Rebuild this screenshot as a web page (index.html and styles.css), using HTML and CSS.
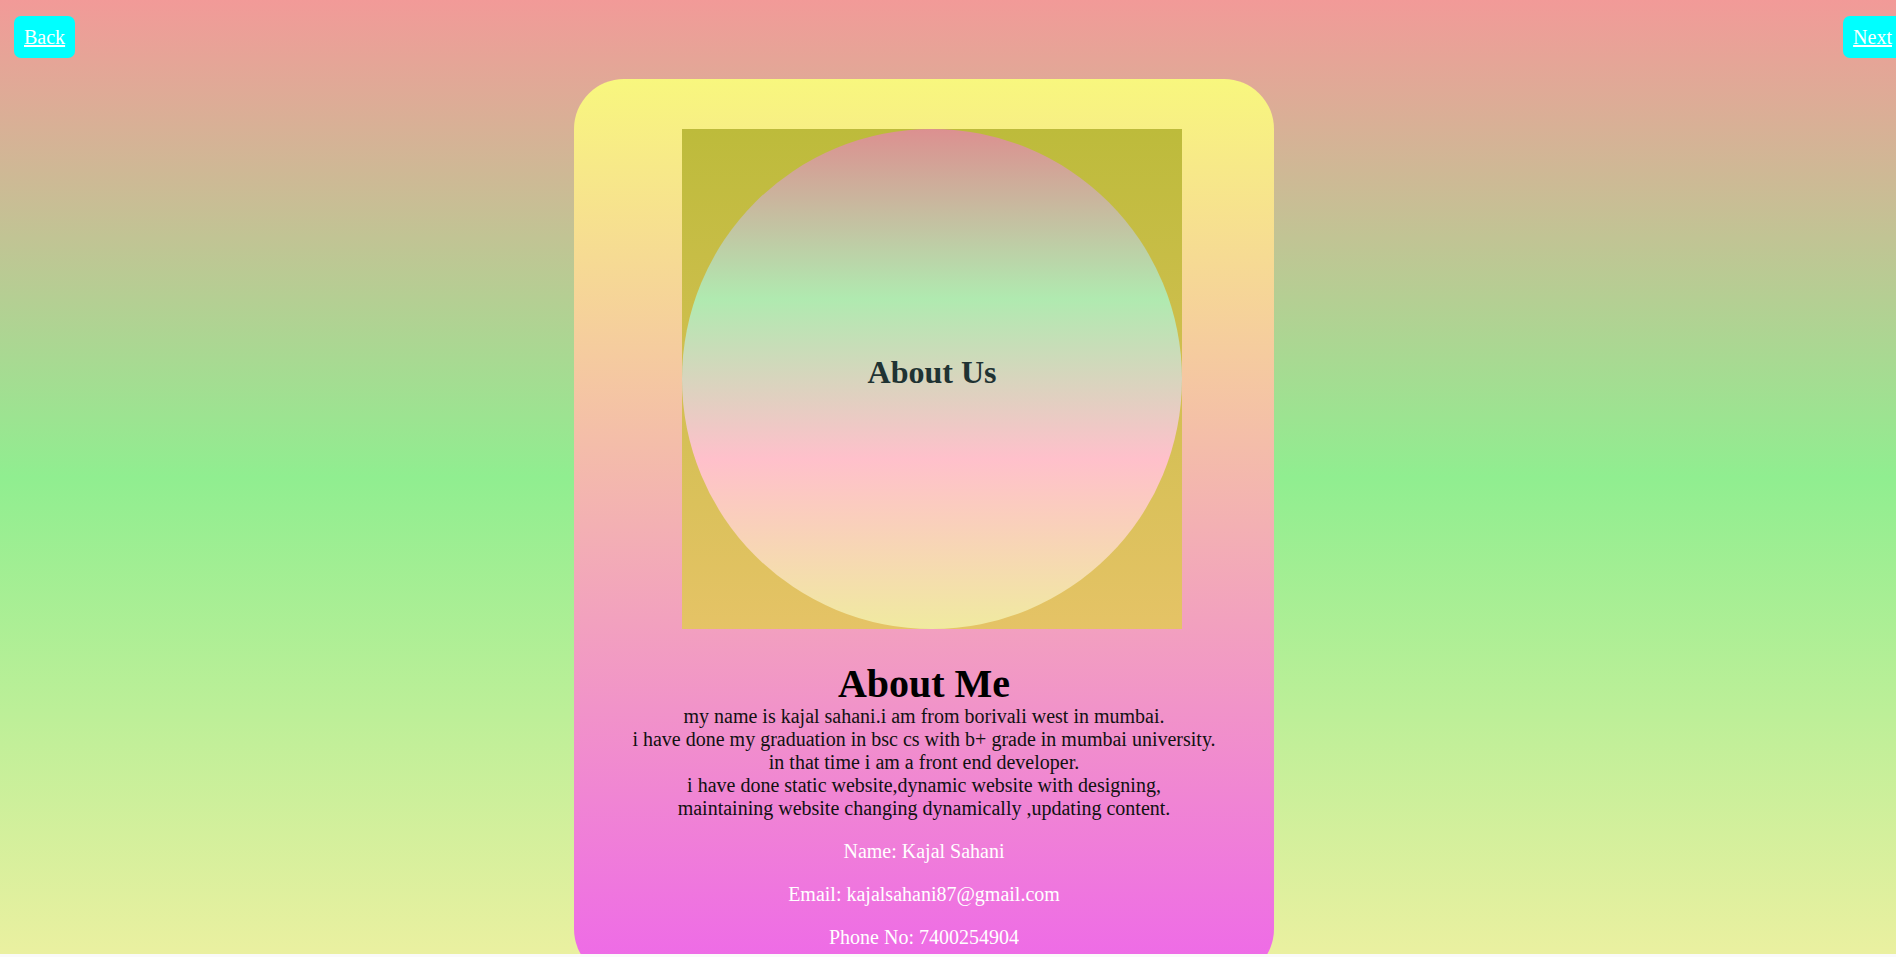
FILE: index.html
```html
<!DOCTYPE html>
<html>
<head>
<meta charset="utf-8">
<title>About Me</title>
<link rel="stylesheet" href="styles.css">
</head>
<body>
<div class="page">
  <header class="topbar">
    <a class="nav-btn" href="#">Back</a>
    <a class="nav-btn nav-next" href="#">Next</a>
  </header>
  <main class="card">
    <div class="photo">
      <div class="circle">
        <h2 class="circle-title">About Us</h2>
      </div>
    </div>
    <h1 class="title">About Me</h1>
    <div class="bio">
      my name is kajal sahani.i am from borivali west in mumbai.<br>
      i have done my graduation in bsc cs with b+ grade in mumbai university.<br>
      in that time i am a front end developer.<br>
      i have done static website,dynamic website with designing,<br>
      maintaining website changing dynamically ,updating content.
    </div>
    <p class="info">Name: Kajal Sahani</p>
    <p class="info">Email: kajalsahani87@gmail.com</p>
    <p class="info">Phone No: 7400254904</p>
  </main>
</div>
</body>
</html>
```
FILE: styles.css
```css
html, body {
  margin: 0;
  padding: 0;
  background: #fafafa;
  overflow: hidden;
}
body {
  font-family: "Liberation Serif", "Times New Roman", serif;
}
.page {
  height: 954px;
  overflow: hidden;
  background: linear-gradient(to bottom, #f29a98 0%, #90ee90 50%, #eaf0a0 100%);
}
.topbar {
  display: flex;
  justify-content: space-between;
  padding: 16px 0 0 14px;
  margin-right: -6px;
}
.nav-btn {
  display: block;
  background: #00ffff;
  color: #ffffff;
  font-size: 20px;
  line-height: 22px;
  padding: 10px 10px;
  border-radius: 7px;
  text-decoration: underline;
}
.card {
  width: 700px;
  margin: 21px 0 0 calc(50% - 374px);
  padding: 50px 0 30px;
  box-sizing: border-box;
  border-radius: 50px;
  background: linear-gradient(to bottom, #f8f77e 0%, #ee68e9 100%);
  text-align: center;
}
.photo {
  width: 500px;
  height: 500px;
  margin-left: 108px;
  background: linear-gradient(to bottom, #bdbb3b 0%, #e5c366 100%);
}
.circle {
  width: 500px;
  height: 500px;
  border-radius: 50%;
  background: linear-gradient(to bottom, #dc9090 0%, #b0eab0 34%, #ffc0cb 66%, #f0eaa0 100%);
  display: flex;
  align-items: center;
  justify-content: center;
  padding-bottom: 14px;
  box-sizing: border-box;
}
.circle-title {
  margin: 0;
  font-size: 32px;
  font-weight: bold;
  color: #1f3333;
}
.title {
  margin: 34px 0 0;
  font-size: 40px;
  line-height: 42px;
  font-weight: bold;
  color: #000;
}
.bio {
  font-size: 20px;
  line-height: 23px;
  color: #111;
}
.info {
  margin: 20px 0 0;
  font-size: 20px;
  line-height: 23px;
  color: #ffffff;
}
```
